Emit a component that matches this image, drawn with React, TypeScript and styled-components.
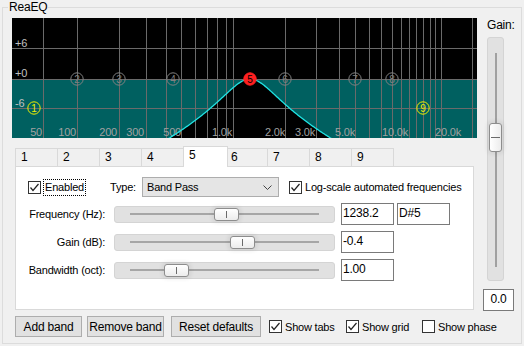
import React from "react";
import styled, { createGlobalStyle } from "styled-components";

const GlobalStyle = createGlobalStyle`
  html, body {
    margin: 0;
    padding: 0;
    background: #f0f0f0;
  }
  body {
    font-family: "Liberation Sans", Arial, sans-serif;
    font-size: 11px;
    letter-spacing: -0.2px;
    color: #000;
  }
`;

const Window = styled.div`
  width: 524px;
  height: 346px;
  box-sizing: border-box;
  padding: 1px 2px 2px 2px;
`;

const Group = styled.fieldset`
  margin: 0;
  height: 100%;
  box-sizing: border-box;
  border: 1px solid #dcdcdc;
  padding: 4px 6px 5px 9px;
  min-width: 0;
`;

const Legend = styled.legend`
  margin-left: -4px;
  padding: 0 1px;
  font-size: 12px;
  line-height: 13px;
`;

const Body = styled.div`
  display: flex;
  flex-direction: column;
`;

const TopArea = styled.div`
  display: grid;
  grid-template-columns: 465px 33px;
  column-gap: 5px;
  align-items: start;
  height: 293px;
`;

const LeftCol = styled.div`
  display: flex;
  flex-direction: column;
`;

const Graph = styled.svg`
  display: block;
  background: #000;
`;

const TabStrip = styled.div`
  display: flex;
  align-items: flex-end;
  height: 20px;
  margin: 8px 0 0 4px;
`;

const Tab = styled.div<{ $active?: boolean }>`
  box-sizing: border-box;
  width: ${(p) => (p.$active ? 45 : 43)}px;
  height: ${(p) => (p.$active ? 21 : 18)}px;
  margin-left: -1px;
  margin-right: ${(p) => (p.$active ? -2 : 0)}px;
  margin-bottom: ${(p) => (p.$active ? -1 : 0)}px;
  border: 1px solid #d9d9d9;
  border-bottom: none;
  background: ${(p) => (p.$active ? "#fff" : "#f0f0f0")};
  padding: 1px 0 0 5px;
  font-size: 12px;
  line-height: 14px;
  z-index: ${(p) => (p.$active ? 2 : 1)};
`;

const Panel = styled.div`
  margin-left: 3px;
  width: 459px;
  height: 144px;
  box-sizing: border-box;
  border: 1px solid #d9d9d9;
  background: #fff;
  padding: 10px 0 0 12px;
`;

const TopRow = styled.div`
  display: flex;
  align-items: center;
  height: 20px;
`;

const EnabledCell = styled.div`
  width: 82px;
  display: flex;
  align-items: center;
`;

const FocusLabel = styled.span`
  margin-left: 2px;
  padding: 1px 1px 2px 1px;
  border: 1px dotted #000;
`;

const TypeLabel = styled.span`
  width: 32px;
`;

const Select = styled.div`
  box-sizing: border-box;
  width: 137px;
  height: 20px;
  border: 1px solid #adadad;
  background: #e5e5e5;
  display: flex;
  align-items: center;
  justify-content: space-between;
  padding: 0 6px 0 4px;
`;

const CheckItem = styled.label<{ $w?: number; $ml?: number }>`
  display: flex;
  align-items: center;
  gap: 3px;
  flex: none;
  width: ${(p) => (p.$w ? `${p.$w}px` : "auto")};
  margin-left: ${(p) => p.$ml ?? 0}px;
`;

const Box = styled.span`
  box-sizing: border-box;
  width: 13px;
  height: 13px;
  border: 1px solid #333;
  background: #fff;
  display: flex;
  align-items: center;
  justify-content: center;
  flex: none;
`;

const ParamGrid = styled.div`
  margin-top: 6px;
  display: grid;
  grid-template-columns: 86px 227px 56px 53px;
  grid-auto-rows: 22px;
  row-gap: 6px;
  align-items: center;
`;

const ParamLabel = styled.span`
  text-align: right;
  padding-right: 9px;
`;

const Track = styled.div`
  position: relative;
  box-sizing: border-box;
  width: 221px;
  height: 17px;
  border: 1px solid #d4d4d4;
  border-radius: 3px;
  background: #e1e1e1;
  display: flex;
  align-items: center;
  padding: 0 15px;
`;

const TrackLine = styled.div`
  flex: 1;
  height: 2px;
  background: #a6a6a6;
`;

const HThumb = styled.div`
  position: absolute;
  top: 1px;
  box-sizing: border-box;
  width: 25px;
  height: 13px;
  border: 1px solid #8d8d8d;
  border-radius: 3px;
  background: linear-gradient(#ffffff, #ececec);
  box-shadow: 0 0 4px 2px rgba(0, 0, 0, 0.07);
  display: flex;
  justify-content: center;
  align-items: center;
  &::after {
    content: "";
    width: 1px;
    height: 7px;
    background: #6a6a6a;
  }
`;

const ValueBox = styled.div<{ $center?: boolean }>`
  box-sizing: border-box;
  width: 53px;
  height: 22px;
  border: 1px solid #7a7a7a;
  background: #fff;
  padding: 2px 1px 0 1px;
  font-size: 12px;
  line-height: 14px;
  text-align: ${(p) => (p.$center ? "center" : "left")};
`;

const GainCol = styled.div`
  display: flex;
  flex-direction: column;
  align-items: flex-start;
`;

const GainLabel = styled.span`
  margin-left: 5px;
  font-size: 12px;
  line-height: 14px;
`;

const VTrack = styled.div`
  position: relative;
  box-sizing: border-box;
  margin: 5px 0 0 5px;
  width: 17px;
  height: 244px;
  border: 1px solid #d4d4d4;
  border-radius: 3px;
  background: #e1e1e1;
  display: flex;
  justify-content: center;
  padding: 15px 0 13px 0;
`;

const VLine = styled.div`
  width: 2px;
  background: #a0a0a0;
`;

const VThumb = styled.div`
  position: absolute;
  left: 1px;
  box-sizing: border-box;
  width: 13px;
  height: 29px;
  border: 1px solid #8d8d8d;
  border-radius: 3px;
  background: linear-gradient(90deg, #ffffff, #ececec);
  box-shadow: 0 0 4px 2px rgba(0, 0, 0, 0.07);
  display: flex;
  align-items: center;
  justify-content: center;
  &::after {
    content: "";
    width: 9px;
    height: 1px;
    background: #6a6a6a;
  }
`;

const GainValue = styled(ValueBox)`
  margin: 8px 0 0 1px;
  width: 31px;
`;

const ButtonRow = styled.div`
  display: flex;
  align-items: center;
  margin: 5px 0 0 3px;
  height: 21px;
`;

const Button = styled.button<{ $w: number; $ml?: number }>`
  box-sizing: border-box;
  width: ${(p) => p.$w}px;
  height: 21px;
  margin-left: ${(p) => p.$ml ?? 0}px;
  padding: 0;
  border: 1px solid #adadad;
  background: #e1e1e1;
  font: inherit;
  font-size: 12px;
  letter-spacing: -0.2px;
  color: #000;
`;

const Check = () => (
  <svg width="11" height="11" viewBox="0 0 11 11">
    <polyline points="1.5,5.5 4,8.5 9.5,2" fill="none" stroke="#222" strokeWidth="1.2" />
  </svg>
);

const CheckBox = ({ checked, label, w, ml }: { checked: boolean; label: string; w?: number; ml?: number }) => (
  <CheckItem $w={w} $ml={ml}>
    <Box>{checked && <Check />}</Box>
    <span>{label}</span>
  </CheckItem>
);

// ---- graph data ----
const W = 465;
const H = 120;
const ZERO = 61;
const PX_PER_DB = 4.9;

const gridX = [31, 65, 107, 134, 154, 169, 183, 195, 205, 214, 221, 273, 304, 327, 343, 357, 369, 380, 389, 397, 404, 411, 418, 423, 429, 460];
const gridY = [30, 61, 90];

const freqLabels: [string, number][] = [
  ["50", 30], ["100", 64], ["200", 105], ["300", 132], ["500", 169], ["1.0k", 220],
  ["2.0k", 273], ["3.0k", 303], ["5.0k", 343], ["10.0k", 396], ["20.0k", 449],
];

const dbLabels: [string, number][] = [["+6", 29], ["+0", 59], ["-6", 89]];

type Band = { n: number; x: number; y: number; kind: "edge" | "off" | "sel" };
const bands: Band[] = [
  { n: 1, x: 22, y: 90, kind: "edge" },
  { n: 2, x: 65, y: ZERO, kind: "off" },
  { n: 3, x: 107, y: ZERO, kind: "off" },
  { n: 4, x: 161, y: ZERO, kind: "off" },
  { n: 5, x: 238, y: ZERO, kind: "sel" },
  { n: 6, x: 273, y: ZERO, kind: "off" },
  { n: 7, x: 343, y: ZERO, kind: "off" },
  { n: 8, x: 380, y: ZERO, kind: "off" },
  { n: 9, x: 411, y: 90, kind: "edge" },
];

const curve = (() => {
  const pts: string[] = [];
  for (let x = 150; x <= 330; x += 1) {
    const s = Math.sinh((x - 238) * 0.0115);
    const db = -10 * Math.log10(1 + 4 * 1.82 * 1.82 * s * s);
    pts.push(`${x},${Math.min(H + 2, ZERO - db * PX_PER_DB).toFixed(2)}`);
  }
  return pts;
})();

const EqGraph = () => (
  <Graph width={W} height={H} viewBox={`0 0 ${W} ${H}`}>
    <rect x="0" y={ZERO} width={W} height={H - ZERO} fill="#006060" />
    <polygon points={`150,${H + 2} ${curve.join(" ")} 330,${H + 2}`} fill="#000" />
    {gridX.map((x) => (
      <line key={x} x1={x + 0.5} x2={x + 0.5} y1="0" y2={H} stroke="#6a6a6a" strokeWidth="1" />
    ))}
    {gridY.map((y) => (
      <line key={y} x1="0" x2={W} y1={y + 0.5} y2={y + 0.5} stroke="#6a6a6a" strokeWidth="1" />
    ))}
    {dbLabels.map(([t, y]) => (
      <text key={t} x="3" y={y} fill="#c0c0c0" fontSize="11" fontFamily="Liberation Sans, Arial, sans-serif">
        {t}
      </text>
    ))}
    {freqLabels.map(([t, x]) => (
      <text key={t} x={x} y="118" textAnchor="end" fill="#a0a0a0" fontSize="11" fontFamily="Liberation Sans, Arial, sans-serif">
        {t}
      </text>
    ))}
    <polyline points={curve.join(" ")} fill="none" stroke="#20e4e4" strokeWidth="1.3" />
    {bands.map((b) => {
      const col = b.kind === "edge" ? "#f0f000" : b.kind === "off" ? "#808080" : "#ff2020";
      return (
        <g key={b.n}>
          <circle
            cx={b.x}
            cy={b.y}
            r="6.2"
            fill={b.kind === "sel" ? "#ff2020" : "none"}
            stroke={col}
            strokeWidth="1"
          />
          <text
            x={b.x}
            y={b.y + 3.6}
            textAnchor="middle"
            fontSize="10"
            fontFamily="Liberation Sans, Arial, sans-serif"
            fill={b.kind === "sel" ? "#000" : col}
          >
            {b.n}
          </text>
        </g>
      );
    })}
  </Graph>
);

const params = [
  { label: "Frequency (Hz):", thumb: 99, value: "1238.2", note: "D#5" },
  { label: "Gain (dB):", thumb: 115, value: "-0.4" },
  { label: "Bandwidth (oct):", thumb: 49, value: "1.00" },
];

export default function App() {
  return (
    <Window>
      <GlobalStyle />
      <Group>
        <Legend>ReaEQ</Legend>
        <Body>
          <TopArea>
            <LeftCol>
              <EqGraph />
              <TabStrip>
                {[1, 2, 3, 4, 5, 6, 7, 8, 9].map((n) => (
                  <Tab key={n} $active={n === 5}>
                    {n}
                  </Tab>
                ))}
              </TabStrip>
              <Panel>
                <TopRow>
                  <EnabledCell>
                    <Box>
                      <Check />
                    </Box>
                    <FocusLabel>Enabled</FocusLabel>
                  </EnabledCell>
                  <TypeLabel>Type:</TypeLabel>
                  <Select>
                    <span>Band Pass</span>
                    <svg width="9" height="5" viewBox="0 0 9 5">
                      <polyline points="0.5,0.5 4.5,4.5 8.5,0.5" fill="none" stroke="#444" strokeWidth="1" />
                    </svg>
                  </Select>
                  <CheckBox checked label="Log-scale automated frequencies" ml={10} />
                </TopRow>
                <ParamGrid>
                  {params.map((p) => (
                    <React.Fragment key={p.label}>
                      <ParamLabel>{p.label}</ParamLabel>
                      <Track>
                        <TrackLine />
                        <HThumb style={{ left: p.thumb }} />
                      </Track>
                      <ValueBox>{p.value}</ValueBox>
                      {p.note ? <ValueBox>{p.note}</ValueBox> : <span />}
                    </React.Fragment>
                  ))}
                </ParamGrid>
              </Panel>
            </LeftCol>
            <GainCol>
              <GainLabel>Gain:</GainLabel>
              <VTrack>
                <VLine />
                <VThumb style={{ top: 85 }} />
              </VTrack>
              <GainValue $center>0.0</GainValue>
            </GainCol>
          </TopArea>
          <ButtonRow>
            <Button $w={67}>Add band</Button>
            <Button $w={77} $ml={5}>Remove band</Button>
            <Button $w={90} $ml={7}>Reset defaults</Button>
            <CheckBox checked label="Show tabs" w={77} ml={8} />
            <CheckBox checked label="Show grid" w={76} />
            <CheckBox checked={false} label="Show phase" />
          </ButtonRow>
        </Body>
      </Group>
    </Window>
  );
}
